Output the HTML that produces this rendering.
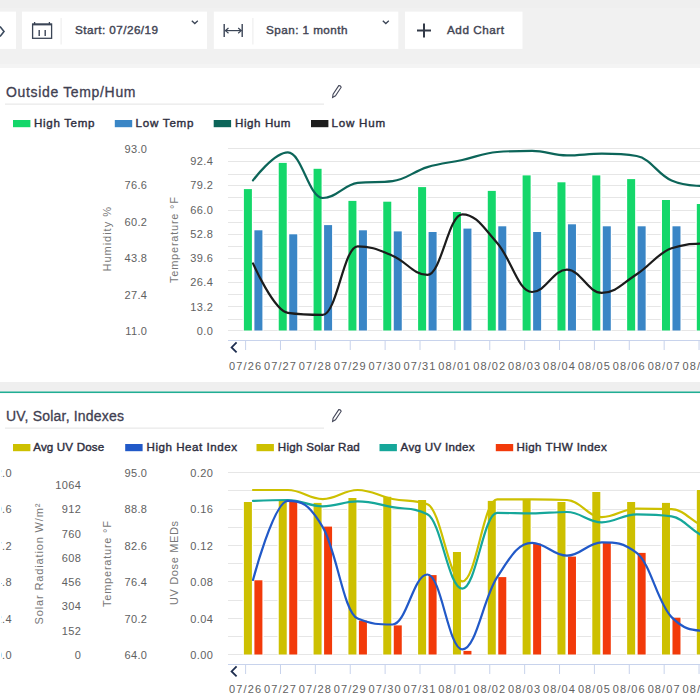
<!DOCTYPE html><html><head><meta charset="utf-8"><style>html,body{margin:0;padding:0;width:700px;height:700px;overflow:hidden;background:#efefef}svg{display:block}</style></head><body>
<svg width="700" height="700" viewBox="0 0 700 700" font-family='"Liberation Sans", sans-serif'>
<defs><clipPath id="lclip"><rect x="0.9" y="0" width="100" height="700"/></clipPath></defs>
<rect x="0" y="0" width="700" height="8" fill="#efefef"/>
<rect x="0" y="8" width="700" height="56" fill="#f1f1f1"/>
<rect x="0" y="64" width="700" height="4" fill="#f4f4f4"/>
<rect x="-20" y="11.6" width="36" height="37.3" fill="#ffffff"/>
<rect x="22" y="11.6" width="185" height="37.3" fill="#ffffff"/>
<rect x="213.8" y="11.6" width="184.5" height="37.3" fill="#ffffff"/>
<rect x="405" y="11.6" width="117.5" height="37.3" fill="#ffffff"/>
<rect x="60.6" y="18" width="1" height="26.5" fill="#ececec"/>
<rect x="252.4" y="18" width="1" height="26.5" fill="#ececec"/>
<path d="M0 26.5 L4 31.5 L0 36.5" fill="none" stroke="#3b4a5e" stroke-width="1.6"/>
<g fill="none" stroke="#3b4556" stroke-width="1.3"><rect x="32.6" y="24" width="19" height="14.3"/><line x1="32.6" y1="24.6" x2="51.6" y2="24.6" stroke-width="1.6"/><line x1="34.6" y1="22" x2="34.6" y2="24" /><line x1="49.4" y1="22" x2="49.4" y2="24" /><line x1="39.2" y1="30" x2="39.2" y2="36" stroke-width="1.4"/><line x1="45.2" y1="30" x2="45.2" y2="36" stroke-width="1.4"/></g>
<text x="75" y="34" font-size="11.7" fill="#424453" stroke="#424453" stroke-width="0.4" textLength="83" lengthAdjust="spacing">Start: 07/26/19</text>
<path d="M191.8 20.8 L194.8 23.6 L197.8 20.8" fill="none" stroke="#3b4556" stroke-width="1.3"/>
<g fill="none" stroke="#3b4556" stroke-width="1.4"><line x1="224.2" y1="24" x2="224.2" y2="37"/><line x1="242.2" y1="24" x2="242.2" y2="37"/><line x1="225" y1="30.6" x2="241.5" y2="30.6" stroke-width="1.2"/><path d="M228.5 28 L225.5 30.6 L228.5 33.2" stroke-width="1.2"/><path d="M238.2 28 L241.2 30.6 L238.2 33.2" stroke-width="1.2"/></g>
<text x="266" y="34" font-size="11.7" fill="#424453" stroke="#424453" stroke-width="0.4" textLength="81.5" lengthAdjust="spacing">Span: 1 month</text>
<path d="M382.8 20.8 L385.8 23.6 L388.8 20.8" fill="none" stroke="#3b4556" stroke-width="1.3"/>
<g stroke="#333a48" stroke-width="2"><line x1="417" y1="30.5" x2="431" y2="30.5"/><line x1="424" y1="23.5" x2="424" y2="37.5"/></g>
<text x="447" y="34" font-size="11.7" fill="#424453" stroke="#424453" stroke-width="0.4" textLength="57" lengthAdjust="spacing">Add Chart</text>
<rect x="0" y="68" width="700" height="314" fill="#ffffff"/>
<rect x="0" y="382" width="700" height="9.5" fill="#efefef"/>
<rect x="0" y="391.5" width="700" height="1.7" fill="#20ae94"/>
<rect x="0" y="393.2" width="700" height="306.8" fill="#ffffff"/>
<text x="6" y="97" font-size="14" fill="#3f4051" stroke="#3f4051" stroke-width="0.3" textLength="129.5" lengthAdjust="spacing">Outside Temp/Hum</text>
<rect x="5" y="103.6" width="319" height="1" fill="#e3e3e3"/>
<g transform="translate(332.6,97.4) rotate(-56)"><path d="M0 0 L3 -1.45 L13.2 -1.45 Q14.4 0 13.2 1.45 L3 1.45 Z" fill="none" stroke="#45485a" stroke-width="1.1"/></g>
<rect x="13" y="120" width="17.4" height="7.2" fill="#14d76a"/>
<text x="34" y="127" font-size="11.6" fill="#2e2e3e" stroke="#2e2e3e" stroke-width="0.4" textLength="60.5" lengthAdjust="spacing">High Temp</text>
<rect x="114.8" y="120" width="17.4" height="7.2" fill="#3a86c6"/>
<text x="135.5" y="127" font-size="11.6" fill="#2e2e3e" stroke="#2e2e3e" stroke-width="0.4" textLength="58" lengthAdjust="spacing">Low Temp</text>
<rect x="213.7" y="120" width="17.4" height="7.2" fill="#0c6559"/>
<text x="235" y="127" font-size="11.6" fill="#2e2e3e" stroke="#2e2e3e" stroke-width="0.4" textLength="55.5" lengthAdjust="spacing">High Hum</text>
<rect x="311" y="120" width="17.4" height="7.2" fill="#1c1c1c"/>
<text x="331.6" y="127" font-size="11.6" fill="#2e2e3e" stroke="#2e2e3e" stroke-width="0.4" textLength="53.5" lengthAdjust="spacing">Low Hum</text>
<text x="6" y="421" font-size="14" fill="#3f4051" stroke="#3f4051" stroke-width="0.3" textLength="118" lengthAdjust="spacing">UV, Solar, Indexes</text>
<rect x="5" y="427.6" width="319" height="1" fill="#e3e3e3"/>
<g transform="translate(332.6,421.4) rotate(-56)"><path d="M0 0 L3 -1.45 L13.2 -1.45 Q14.4 0 13.2 1.45 L3 1.45 Z" fill="none" stroke="#45485a" stroke-width="1.1"/></g>
<rect x="13" y="444" width="17.4" height="7.2" fill="#cdc000"/>
<text x="33.2" y="451" font-size="11.6" fill="#2e2e3e" stroke="#2e2e3e" stroke-width="0.4" textLength="71" lengthAdjust="spacing">Avg UV Dose</text>
<rect x="125.2" y="444" width="17.4" height="7.2" fill="#2159c8"/>
<text x="146.5" y="451" font-size="11.6" fill="#2e2e3e" stroke="#2e2e3e" stroke-width="0.4" textLength="90.5" lengthAdjust="spacing">High Heat Index</text>
<rect x="256.5" y="444" width="17.4" height="7.2" fill="#cdc000"/>
<text x="277.8" y="451" font-size="11.6" fill="#2e2e3e" stroke="#2e2e3e" stroke-width="0.4" textLength="82" lengthAdjust="spacing">High Solar Rad</text>
<rect x="379.5" y="444" width="17.4" height="7.2" fill="#16a79a"/>
<text x="400.6" y="451" font-size="11.6" fill="#2e2e3e" stroke="#2e2e3e" stroke-width="0.4" textLength="74" lengthAdjust="spacing">Avg UV Index</text>
<rect x="495.8" y="444" width="17.4" height="7.2" fill="#f23a0a"/>
<text x="516.5" y="451" font-size="11.6" fill="#2e2e3e" stroke="#2e2e3e" stroke-width="0.4" textLength="90.2" lengthAdjust="spacing">High THW Index</text>
<rect x="228" y="148" width="472" height="1" fill="#e6e6e6"/>
<rect x="228" y="161" width="472" height="1" fill="#e6e6e6"/>
<rect x="228" y="174" width="472" height="1" fill="#e6e6e6"/>
<rect x="228" y="185" width="472" height="1" fill="#e6e6e6"/>
<rect x="228" y="197" width="472" height="1" fill="#e6e6e6"/>
<rect x="228" y="210" width="472" height="1" fill="#e6e6e6"/>
<rect x="228" y="222" width="472" height="1" fill="#e6e6e6"/>
<rect x="228" y="234" width="472" height="1" fill="#e6e6e6"/>
<rect x="228" y="246" width="472" height="1" fill="#e6e6e6"/>
<rect x="228" y="258" width="472" height="1" fill="#e6e6e6"/>
<rect x="228" y="270" width="472" height="1" fill="#e6e6e6"/>
<rect x="228" y="282" width="472" height="1" fill="#e6e6e6"/>
<rect x="228" y="294" width="472" height="1" fill="#e6e6e6"/>
<rect x="228" y="306" width="472" height="1" fill="#e6e6e6"/>
<rect x="228" y="319" width="472" height="1" fill="#e6e6e6"/>
<rect x="228" y="330" width="472" height="1" fill="#e6e6e6"/>
<text x="147.4" y="152.80" font-size="11" fill="#616161" text-anchor="end" letter-spacing="0.4">93.0</text>
<text x="147.4" y="189.24" font-size="11" fill="#616161" text-anchor="end" letter-spacing="0.4">76.6</text>
<text x="147.4" y="225.68" font-size="11" fill="#616161" text-anchor="end" letter-spacing="0.4">60.2</text>
<text x="147.4" y="262.12" font-size="11" fill="#616161" text-anchor="end" letter-spacing="0.4">43.8</text>
<text x="147.4" y="298.56" font-size="11" fill="#616161" text-anchor="end" letter-spacing="0.4">27.4</text>
<text x="147.4" y="335.00" font-size="11" fill="#616161" text-anchor="end" letter-spacing="0.4">11.0</text>
<text x="213.3" y="165.00" font-size="11" fill="#616161" text-anchor="end" letter-spacing="0.4">92.4</text>
<text x="213.3" y="189.29" font-size="11" fill="#616161" text-anchor="end" letter-spacing="0.4">79.2</text>
<text x="213.3" y="213.57" font-size="11" fill="#616161" text-anchor="end" letter-spacing="0.4">66.0</text>
<text x="213.3" y="237.86" font-size="11" fill="#616161" text-anchor="end" letter-spacing="0.4">52.8</text>
<text x="213.3" y="262.14" font-size="11" fill="#616161" text-anchor="end" letter-spacing="0.4">39.6</text>
<text x="213.3" y="286.43" font-size="11" fill="#616161" text-anchor="end" letter-spacing="0.4">26.4</text>
<text x="213.3" y="310.71" font-size="11" fill="#616161" text-anchor="end" letter-spacing="0.4">13.2</text>
<text x="213.3" y="335.00" font-size="11" fill="#616161" text-anchor="end" letter-spacing="0.4">0.0</text>
<text x="0" y="0" transform="translate(111.1,239.3) rotate(-90)" font-size="11" fill="#777777" text-anchor="middle" textLength="64.5" lengthAdjust="spacing">Humidity %</text>
<text x="0" y="0" transform="translate(177.79999999999998,240) rotate(-90)" font-size="11" fill="#777777" text-anchor="middle" textLength="86" lengthAdjust="spacing">Temperature °F</text>
<rect x="242.60" y="188.10" width="10.6" height="142.40" fill="#ffffff"/>
<rect x="243.90" y="189.10" width="8" height="141.40" fill="#14d76a"/>
<rect x="277.44" y="161.90" width="10.6" height="168.60" fill="#ffffff"/>
<rect x="278.74" y="162.90" width="8" height="167.60" fill="#14d76a"/>
<rect x="312.28" y="167.80" width="10.6" height="162.70" fill="#ffffff"/>
<rect x="313.58" y="168.80" width="8" height="161.70" fill="#14d76a"/>
<rect x="347.12" y="199.90" width="10.6" height="130.60" fill="#ffffff"/>
<rect x="348.42" y="200.90" width="8" height="129.60" fill="#14d76a"/>
<rect x="381.96" y="200.70" width="10.6" height="129.80" fill="#ffffff"/>
<rect x="383.26" y="201.70" width="8" height="128.80" fill="#14d76a"/>
<rect x="416.80" y="186.10" width="10.6" height="144.40" fill="#ffffff"/>
<rect x="418.10" y="187.10" width="8" height="143.40" fill="#14d76a"/>
<rect x="451.64" y="211.00" width="10.6" height="119.50" fill="#ffffff"/>
<rect x="452.94" y="212.00" width="8" height="118.50" fill="#14d76a"/>
<rect x="486.48" y="189.90" width="10.6" height="140.60" fill="#ffffff"/>
<rect x="487.78" y="190.90" width="8" height="139.60" fill="#14d76a"/>
<rect x="521.32" y="174.40" width="10.6" height="156.10" fill="#ffffff"/>
<rect x="522.62" y="175.40" width="8" height="155.10" fill="#14d76a"/>
<rect x="556.16" y="181.30" width="10.6" height="149.20" fill="#ffffff"/>
<rect x="557.46" y="182.30" width="8" height="148.20" fill="#14d76a"/>
<rect x="591.00" y="174.40" width="10.6" height="156.10" fill="#ffffff"/>
<rect x="592.30" y="175.40" width="8" height="155.10" fill="#14d76a"/>
<rect x="625.84" y="178.10" width="10.6" height="152.40" fill="#ffffff"/>
<rect x="627.14" y="179.10" width="8" height="151.40" fill="#14d76a"/>
<rect x="660.68" y="199.00" width="10.6" height="131.50" fill="#ffffff"/>
<rect x="661.98" y="200.00" width="8" height="130.50" fill="#14d76a"/>
<rect x="695.52" y="203.00" width="10.6" height="127.50" fill="#ffffff"/>
<rect x="696.82" y="204.00" width="8" height="126.50" fill="#14d76a"/>
<rect x="253.10" y="229.30" width="10.6" height="101.20" fill="#ffffff"/>
<rect x="254.40" y="230.30" width="8" height="100.20" fill="#3a86c6"/>
<rect x="287.94" y="233.30" width="10.6" height="97.20" fill="#ffffff"/>
<rect x="289.24" y="234.30" width="8" height="96.20" fill="#3a86c6"/>
<rect x="322.78" y="224.10" width="10.6" height="106.40" fill="#ffffff"/>
<rect x="324.08" y="225.10" width="8" height="105.40" fill="#3a86c6"/>
<rect x="357.62" y="229.30" width="10.6" height="101.20" fill="#ffffff"/>
<rect x="358.92" y="230.30" width="8" height="100.20" fill="#3a86c6"/>
<rect x="392.46" y="230.40" width="10.6" height="100.10" fill="#ffffff"/>
<rect x="393.76" y="231.40" width="8" height="99.10" fill="#3a86c6"/>
<rect x="427.30" y="231.00" width="10.6" height="99.50" fill="#ffffff"/>
<rect x="428.60" y="232.00" width="8" height="98.50" fill="#3a86c6"/>
<rect x="462.14" y="227.60" width="10.6" height="102.90" fill="#ffffff"/>
<rect x="463.44" y="228.60" width="8" height="101.90" fill="#3a86c6"/>
<rect x="496.98" y="225.30" width="10.6" height="105.20" fill="#ffffff"/>
<rect x="498.28" y="226.30" width="8" height="104.20" fill="#3a86c6"/>
<rect x="531.82" y="231.00" width="10.6" height="99.50" fill="#ffffff"/>
<rect x="533.12" y="232.00" width="8" height="98.50" fill="#3a86c6"/>
<rect x="566.66" y="223.30" width="10.6" height="107.20" fill="#ffffff"/>
<rect x="567.96" y="224.30" width="8" height="106.20" fill="#3a86c6"/>
<rect x="601.50" y="225.30" width="10.6" height="105.20" fill="#ffffff"/>
<rect x="602.80" y="226.30" width="8" height="104.20" fill="#3a86c6"/>
<rect x="636.34" y="225.30" width="10.6" height="105.20" fill="#ffffff"/>
<rect x="637.64" y="226.30" width="8" height="104.20" fill="#3a86c6"/>
<rect x="671.18" y="225.30" width="10.6" height="105.20" fill="#ffffff"/>
<rect x="672.48" y="226.30" width="8" height="104.20" fill="#3a86c6"/>
<rect x="706.02" y="225.00" width="10.6" height="105.50" fill="#ffffff"/>
<rect x="707.32" y="226.00" width="8" height="104.50" fill="#3a86c6"/>
<path d="M253.00 180.40 C253.00 180.40 273.93 152.40 287.88 152.40 C301.83 152.40 308.81 198.00 322.76 198.00 C336.71 198.00 343.69 184.60 357.64 182.90 C371.59 181.20 378.57 182.90 392.52 181.20 C406.47 179.50 413.45 171.34 427.40 167.10 C441.35 162.86 448.33 163.02 462.28 160.00 C476.23 156.98 483.21 153.10 497.16 152.00 C511.11 150.90 518.09 150.90 532.04 150.90 C545.99 150.90 552.97 155.40 566.92 155.40 C580.87 155.40 587.85 153.70 601.80 153.70 C615.75 153.70 622.73 153.70 636.68 156.00 C650.63 158.30 657.61 174.50 671.56 180.50 C685.51 186.50 692.49 185.00 706.44 186.50 C720.39 188.00 741.32 188.00 741.32 188.00" fill="none" stroke="#0c6559" stroke-width="2.2" stroke-linejoin="round" stroke-linecap="round"/>
<path d="M253.00 263.40 C253.00 263.40 273.93 310.90 287.88 312.90 C301.83 314.90 308.81 314.90 322.76 314.90 C336.71 314.90 343.69 246.30 357.64 246.30 C371.59 246.30 378.57 249.98 392.52 255.70 C406.47 261.42 413.45 274.90 427.40 274.90 C441.35 274.90 448.33 214.30 462.28 214.30 C476.23 214.30 483.21 227.36 497.16 242.90 C511.11 258.44 518.09 292.00 532.04 292.00 C545.99 292.00 552.97 269.70 566.92 269.70 C580.87 269.70 587.85 292.90 601.80 292.90 C615.75 292.90 622.73 283.22 636.68 274.30 C650.63 265.38 657.61 253.10 671.56 248.30 C685.51 243.50 692.49 244.00 706.44 243.50 C720.39 243.00 741.32 243.00 741.32 243.00" fill="none" stroke="#1c1c1c" stroke-width="2.2" stroke-linejoin="round" stroke-linecap="round"/>
<rect x="228" y="340" width="472" height="1" fill="#c8d3ec"/>
<rect x="245.10" y="340" width="1" height="10" fill="#c8d3ec"/>
<text x="245.60" y="369.7" font-size="11" fill="#616161" text-anchor="middle" letter-spacing="1.1">07/26</text>
<rect x="279.98" y="340" width="1" height="10" fill="#c8d3ec"/>
<text x="280.48" y="369.7" font-size="11" fill="#616161" text-anchor="middle" letter-spacing="1.1">07/27</text>
<rect x="314.86" y="340" width="1" height="10" fill="#c8d3ec"/>
<text x="315.36" y="369.7" font-size="11" fill="#616161" text-anchor="middle" letter-spacing="1.1">07/28</text>
<rect x="349.74" y="340" width="1" height="10" fill="#c8d3ec"/>
<text x="350.24" y="369.7" font-size="11" fill="#616161" text-anchor="middle" letter-spacing="1.1">07/29</text>
<rect x="384.62" y="340" width="1" height="10" fill="#c8d3ec"/>
<text x="385.12" y="369.7" font-size="11" fill="#616161" text-anchor="middle" letter-spacing="1.1">07/30</text>
<rect x="419.50" y="340" width="1" height="10" fill="#c8d3ec"/>
<text x="420.00" y="369.7" font-size="11" fill="#616161" text-anchor="middle" letter-spacing="1.1">07/31</text>
<rect x="454.38" y="340" width="1" height="10" fill="#c8d3ec"/>
<text x="454.88" y="369.7" font-size="11" fill="#616161" text-anchor="middle" letter-spacing="1.1">08/01</text>
<rect x="489.26" y="340" width="1" height="10" fill="#c8d3ec"/>
<text x="489.76" y="369.7" font-size="11" fill="#616161" text-anchor="middle" letter-spacing="1.1">08/02</text>
<rect x="524.14" y="340" width="1" height="10" fill="#c8d3ec"/>
<text x="524.64" y="369.7" font-size="11" fill="#616161" text-anchor="middle" letter-spacing="1.1">08/03</text>
<rect x="559.02" y="340" width="1" height="10" fill="#c8d3ec"/>
<text x="559.52" y="369.7" font-size="11" fill="#616161" text-anchor="middle" letter-spacing="1.1">08/04</text>
<rect x="593.90" y="340" width="1" height="10" fill="#c8d3ec"/>
<text x="594.40" y="369.7" font-size="11" fill="#616161" text-anchor="middle" letter-spacing="1.1">08/05</text>
<rect x="628.78" y="340" width="1" height="10" fill="#c8d3ec"/>
<text x="629.28" y="369.7" font-size="11" fill="#616161" text-anchor="middle" letter-spacing="1.1">08/06</text>
<rect x="663.66" y="340" width="1" height="10" fill="#c8d3ec"/>
<text x="664.16" y="369.7" font-size="11" fill="#616161" text-anchor="middle" letter-spacing="1.1">08/07</text>
<rect x="698.54" y="340" width="1" height="10" fill="#c8d3ec"/>
<text x="699.04" y="369.7" font-size="11" fill="#616161" text-anchor="middle" letter-spacing="1.1">08/08</text>
<path d="M236.6 342.4 L231.6 347.4 L236.6 352.4" fill="none" stroke="#1e2e50" stroke-width="1.8"/>
<rect x="228" y="472" width="472" height="1" fill="#e6e6e6"/>
<rect x="228" y="490" width="472" height="1" fill="#e6e6e6"/>
<rect x="228" y="509" width="472" height="1" fill="#e6e6e6"/>
<rect x="228" y="527" width="472" height="1" fill="#e6e6e6"/>
<rect x="228" y="545" width="472" height="1" fill="#e6e6e6"/>
<rect x="228" y="563" width="472" height="1" fill="#e6e6e6"/>
<rect x="228" y="581" width="472" height="1" fill="#e6e6e6"/>
<rect x="228" y="600" width="472" height="1" fill="#e6e6e6"/>
<rect x="228" y="618" width="472" height="1" fill="#e6e6e6"/>
<rect x="228" y="636" width="472" height="1" fill="#e6e6e6"/>
<rect x="228" y="654" width="472" height="1" fill="#e6e6e6"/>
<g clip-path="url(#lclip)">
<text x="12" y="476.80" font-size="11" fill="#616161" text-anchor="end" letter-spacing="0.4">12.0</text>
<text x="12" y="513.24" font-size="11" fill="#616161" text-anchor="end" letter-spacing="0.4">9.6</text>
<text x="12" y="549.68" font-size="11" fill="#616161" text-anchor="end" letter-spacing="0.4">7.2</text>
<text x="12" y="586.12" font-size="11" fill="#616161" text-anchor="end" letter-spacing="0.4">4.8</text>
<text x="12" y="622.56" font-size="11" fill="#616161" text-anchor="end" letter-spacing="0.4">2.4</text>
<text x="12" y="659.00" font-size="11" fill="#616161" text-anchor="end" letter-spacing="0.4">0.0</text>
</g>
<text x="81.3" y="489.00" font-size="11" fill="#616161" text-anchor="end" letter-spacing="0.4">1064</text>
<text x="81.3" y="513.29" font-size="11" fill="#616161" text-anchor="end" letter-spacing="0.4">912</text>
<text x="81.3" y="537.57" font-size="11" fill="#616161" text-anchor="end" letter-spacing="0.4">760</text>
<text x="81.3" y="561.86" font-size="11" fill="#616161" text-anchor="end" letter-spacing="0.4">608</text>
<text x="81.3" y="586.14" font-size="11" fill="#616161" text-anchor="end" letter-spacing="0.4">456</text>
<text x="81.3" y="610.43" font-size="11" fill="#616161" text-anchor="end" letter-spacing="0.4">304</text>
<text x="81.3" y="634.71" font-size="11" fill="#616161" text-anchor="end" letter-spacing="0.4">152</text>
<text x="81.3" y="659.00" font-size="11" fill="#616161" text-anchor="end" letter-spacing="0.4">0</text>
<text x="147.4" y="476.80" font-size="11" fill="#616161" text-anchor="end" letter-spacing="0.4">95.0</text>
<text x="147.4" y="513.24" font-size="11" fill="#616161" text-anchor="end" letter-spacing="0.4">88.8</text>
<text x="147.4" y="549.68" font-size="11" fill="#616161" text-anchor="end" letter-spacing="0.4">82.6</text>
<text x="147.4" y="586.12" font-size="11" fill="#616161" text-anchor="end" letter-spacing="0.4">76.4</text>
<text x="147.4" y="622.56" font-size="11" fill="#616161" text-anchor="end" letter-spacing="0.4">70.2</text>
<text x="147.4" y="659.00" font-size="11" fill="#616161" text-anchor="end" letter-spacing="0.4">64.0</text>
<text x="213.3" y="476.80" font-size="11" fill="#616161" text-anchor="end" letter-spacing="0.4">0.20</text>
<text x="213.3" y="513.24" font-size="11" fill="#616161" text-anchor="end" letter-spacing="0.4">0.16</text>
<text x="213.3" y="549.68" font-size="11" fill="#616161" text-anchor="end" letter-spacing="0.4">0.12</text>
<text x="213.3" y="586.12" font-size="11" fill="#616161" text-anchor="end" letter-spacing="0.4">0.08</text>
<text x="213.3" y="622.56" font-size="11" fill="#616161" text-anchor="end" letter-spacing="0.4">0.04</text>
<text x="213.3" y="659.00" font-size="11" fill="#616161" text-anchor="end" letter-spacing="0.4">0.00</text>
<text x="0" y="0" transform="translate(43.1,564) rotate(-90)" font-size="11" fill="#777777" text-anchor="middle" textLength="121" lengthAdjust="spacing">Solar Radiation W/m²</text>
<text x="0" y="0" transform="translate(111.1,564) rotate(-90)" font-size="11" fill="#777777" text-anchor="middle" textLength="86" lengthAdjust="spacing">Temperature °F</text>
<text x="0" y="0" transform="translate(177.79999999999998,563) rotate(-90)" font-size="11" fill="#777777" text-anchor="middle" textLength="84" lengthAdjust="spacing">UV Dose MEDs</text>
<rect x="242.60" y="501.00" width="10.6" height="153.50" fill="#ffffff"/>
<rect x="243.90" y="502.00" width="8" height="152.50" fill="#cdc000"/>
<rect x="277.44" y="499.90" width="10.6" height="154.60" fill="#ffffff"/>
<rect x="278.74" y="500.90" width="8" height="153.60" fill="#cdc000"/>
<rect x="312.28" y="501.90" width="10.6" height="152.60" fill="#ffffff"/>
<rect x="313.58" y="502.90" width="8" height="151.60" fill="#cdc000"/>
<rect x="347.12" y="497.00" width="10.6" height="157.50" fill="#ffffff"/>
<rect x="348.42" y="498.00" width="8" height="156.50" fill="#cdc000"/>
<rect x="381.96" y="495.80" width="10.6" height="158.70" fill="#ffffff"/>
<rect x="383.26" y="496.80" width="8" height="157.70" fill="#cdc000"/>
<rect x="416.80" y="499.00" width="10.6" height="155.50" fill="#ffffff"/>
<rect x="418.10" y="500.00" width="8" height="154.50" fill="#cdc000"/>
<rect x="451.64" y="551.00" width="10.6" height="103.50" fill="#ffffff"/>
<rect x="452.94" y="552.00" width="8" height="102.50" fill="#cdc000"/>
<rect x="486.48" y="499.90" width="10.6" height="154.60" fill="#ffffff"/>
<rect x="487.78" y="500.90" width="8" height="153.60" fill="#cdc000"/>
<rect x="521.32" y="498.30" width="10.6" height="156.20" fill="#ffffff"/>
<rect x="522.62" y="499.30" width="8" height="155.20" fill="#cdc000"/>
<rect x="556.16" y="501.00" width="10.6" height="153.50" fill="#ffffff"/>
<rect x="557.46" y="502.00" width="8" height="152.50" fill="#cdc000"/>
<rect x="591.00" y="491.00" width="10.6" height="163.50" fill="#ffffff"/>
<rect x="592.30" y="492.00" width="8" height="162.50" fill="#cdc000"/>
<rect x="625.84" y="501.00" width="10.6" height="153.50" fill="#ffffff"/>
<rect x="627.14" y="502.00" width="8" height="152.50" fill="#cdc000"/>
<rect x="660.68" y="501.90" width="10.6" height="152.60" fill="#ffffff"/>
<rect x="661.98" y="502.90" width="8" height="151.60" fill="#cdc000"/>
<rect x="695.52" y="489.00" width="10.6" height="165.50" fill="#ffffff"/>
<rect x="696.82" y="490.00" width="8" height="164.50" fill="#cdc000"/>
<rect x="253.10" y="579.30" width="10.6" height="75.20" fill="#ffffff"/>
<rect x="254.40" y="580.30" width="8" height="74.20" fill="#f23a0a"/>
<rect x="287.94" y="501.00" width="10.6" height="153.50" fill="#ffffff"/>
<rect x="289.24" y="502.00" width="8" height="152.50" fill="#f23a0a"/>
<rect x="322.78" y="525.60" width="10.6" height="128.90" fill="#ffffff"/>
<rect x="324.08" y="526.60" width="8" height="127.90" fill="#f23a0a"/>
<rect x="357.62" y="619.60" width="10.6" height="34.90" fill="#ffffff"/>
<rect x="358.92" y="620.60" width="8" height="33.90" fill="#f23a0a"/>
<rect x="392.46" y="624.40" width="10.6" height="30.10" fill="#ffffff"/>
<rect x="393.76" y="625.40" width="8" height="29.10" fill="#f23a0a"/>
<rect x="427.30" y="574.10" width="10.6" height="80.40" fill="#ffffff"/>
<rect x="428.60" y="575.10" width="8" height="79.40" fill="#f23a0a"/>
<rect x="462.14" y="649.90" width="10.6" height="4.60" fill="#ffffff"/>
<rect x="463.44" y="650.90" width="8" height="3.60" fill="#f23a0a"/>
<rect x="496.98" y="576.10" width="10.6" height="78.40" fill="#ffffff"/>
<rect x="498.28" y="577.10" width="8" height="77.40" fill="#f23a0a"/>
<rect x="531.82" y="542.70" width="10.6" height="111.80" fill="#ffffff"/>
<rect x="533.12" y="543.70" width="8" height="110.80" fill="#f23a0a"/>
<rect x="566.66" y="555.60" width="10.6" height="98.90" fill="#ffffff"/>
<rect x="567.96" y="556.60" width="8" height="97.90" fill="#f23a0a"/>
<rect x="601.50" y="541.90" width="10.6" height="112.60" fill="#ffffff"/>
<rect x="602.80" y="542.90" width="8" height="111.60" fill="#f23a0a"/>
<rect x="636.34" y="551.90" width="10.6" height="102.60" fill="#ffffff"/>
<rect x="637.64" y="552.90" width="8" height="101.60" fill="#f23a0a"/>
<rect x="671.18" y="616.70" width="10.6" height="37.80" fill="#ffffff"/>
<rect x="672.48" y="617.70" width="8" height="36.80" fill="#f23a0a"/>
<rect x="706.02" y="629.00" width="10.6" height="25.50" fill="#ffffff"/>
<rect x="707.32" y="630.00" width="8" height="24.50" fill="#f23a0a"/>
<path d="M253.00 490.00 C253.00 490.00 273.93 490.00 287.88 490.00 C301.83 490.00 308.81 499.10 322.76 499.10 C336.71 499.10 343.69 490.00 357.64 490.00 C371.59 490.00 378.57 496.14 392.52 499.00 C406.47 501.86 413.45 499.00 427.40 504.30 C441.35 509.60 448.33 581.40 462.28 581.40 C476.23 581.40 483.21 499.40 497.16 499.40 C511.11 499.40 518.09 499.40 532.04 499.40 C545.99 499.40 552.97 499.40 566.92 500.00 C580.87 500.60 587.85 517.10 601.80 517.10 C615.75 517.10 622.73 508.60 636.68 508.60 C650.63 508.60 657.61 508.60 671.56 509.10 C685.51 509.60 692.49 524.00 706.44 527.00 C720.39 530.00 741.32 530.00 741.32 530.00" fill="none" stroke="#cdc000" stroke-width="2.2" stroke-linejoin="round" stroke-linecap="round"/>
<path d="M253.00 500.90 C253.00 500.90 273.93 500.00 287.88 500.00 C301.83 500.00 308.81 506.30 322.76 506.30 C336.71 506.30 343.69 501.40 357.64 501.40 C371.59 501.40 378.57 504.52 392.52 507.10 C406.47 509.68 413.45 507.10 427.40 514.30 C441.35 521.50 448.33 588.60 462.28 588.60 C476.23 588.60 483.21 512.90 497.16 512.90 C511.11 512.90 518.09 513.40 532.04 513.40 C545.99 513.40 552.97 512.00 566.92 512.00 C580.87 512.00 587.85 522.30 601.80 522.30 C615.75 522.30 622.73 514.30 636.68 514.30 C650.63 514.30 657.61 514.30 671.56 516.30 C685.51 518.30 692.49 534.00 706.44 537.00 C720.39 540.00 741.32 540.00 741.32 540.00" fill="none" stroke="#16a79a" stroke-width="2.2" stroke-linejoin="round" stroke-linecap="round"/>
<path d="M253.00 580.00 C253.00 580.00 273.93 500.90 287.88 500.90 C301.83 500.90 308.81 503.56 322.76 527.10 C336.71 550.64 343.69 612.70 357.64 618.60 C371.59 624.50 378.57 624.50 392.52 624.50 C406.47 624.50 413.45 574.50 427.40 574.50 C441.35 574.50 448.33 649.40 462.28 649.40 C476.23 649.40 483.21 598.40 497.16 577.10 C511.11 555.80 518.09 542.90 532.04 542.90 C545.99 542.90 552.97 555.70 566.92 555.70 C580.87 555.70 587.85 542.30 601.80 542.30 C615.75 542.30 622.73 542.30 636.68 552.90 C650.63 563.50 657.61 603.20 671.56 617.10 C685.51 631.00 692.49 630.00 706.44 631.00 C720.39 632.00 741.32 632.00 741.32 632.00" fill="none" stroke="#2159c8" stroke-width="2.2" stroke-linejoin="round" stroke-linecap="round"/>
<rect x="228" y="664" width="472" height="1" fill="#c8d3ec"/>
<rect x="245.10" y="664" width="1" height="10" fill="#c8d3ec"/>
<text x="245.60" y="692.9" font-size="11" fill="#616161" text-anchor="middle" letter-spacing="1.1">07/26</text>
<rect x="279.98" y="664" width="1" height="10" fill="#c8d3ec"/>
<text x="280.48" y="692.9" font-size="11" fill="#616161" text-anchor="middle" letter-spacing="1.1">07/27</text>
<rect x="314.86" y="664" width="1" height="10" fill="#c8d3ec"/>
<text x="315.36" y="692.9" font-size="11" fill="#616161" text-anchor="middle" letter-spacing="1.1">07/28</text>
<rect x="349.74" y="664" width="1" height="10" fill="#c8d3ec"/>
<text x="350.24" y="692.9" font-size="11" fill="#616161" text-anchor="middle" letter-spacing="1.1">07/29</text>
<rect x="384.62" y="664" width="1" height="10" fill="#c8d3ec"/>
<text x="385.12" y="692.9" font-size="11" fill="#616161" text-anchor="middle" letter-spacing="1.1">07/30</text>
<rect x="419.50" y="664" width="1" height="10" fill="#c8d3ec"/>
<text x="420.00" y="692.9" font-size="11" fill="#616161" text-anchor="middle" letter-spacing="1.1">07/31</text>
<rect x="454.38" y="664" width="1" height="10" fill="#c8d3ec"/>
<text x="454.88" y="692.9" font-size="11" fill="#616161" text-anchor="middle" letter-spacing="1.1">08/01</text>
<rect x="489.26" y="664" width="1" height="10" fill="#c8d3ec"/>
<text x="489.76" y="692.9" font-size="11" fill="#616161" text-anchor="middle" letter-spacing="1.1">08/02</text>
<rect x="524.14" y="664" width="1" height="10" fill="#c8d3ec"/>
<text x="524.64" y="692.9" font-size="11" fill="#616161" text-anchor="middle" letter-spacing="1.1">08/03</text>
<rect x="559.02" y="664" width="1" height="10" fill="#c8d3ec"/>
<text x="559.52" y="692.9" font-size="11" fill="#616161" text-anchor="middle" letter-spacing="1.1">08/04</text>
<rect x="593.90" y="664" width="1" height="10" fill="#c8d3ec"/>
<text x="594.40" y="692.9" font-size="11" fill="#616161" text-anchor="middle" letter-spacing="1.1">08/05</text>
<rect x="628.78" y="664" width="1" height="10" fill="#c8d3ec"/>
<text x="629.28" y="692.9" font-size="11" fill="#616161" text-anchor="middle" letter-spacing="1.1">08/06</text>
<rect x="663.66" y="664" width="1" height="10" fill="#c8d3ec"/>
<text x="664.16" y="692.9" font-size="11" fill="#616161" text-anchor="middle" letter-spacing="1.1">08/07</text>
<rect x="698.54" y="664" width="1" height="10" fill="#c8d3ec"/>
<text x="699.04" y="692.9" font-size="11" fill="#616161" text-anchor="middle" letter-spacing="1.1">08/08</text>
<path d="M236.6 666.4 L231.6 671.4 L236.6 676.4" fill="none" stroke="#1e2e50" stroke-width="1.8"/>
</svg></body></html>
